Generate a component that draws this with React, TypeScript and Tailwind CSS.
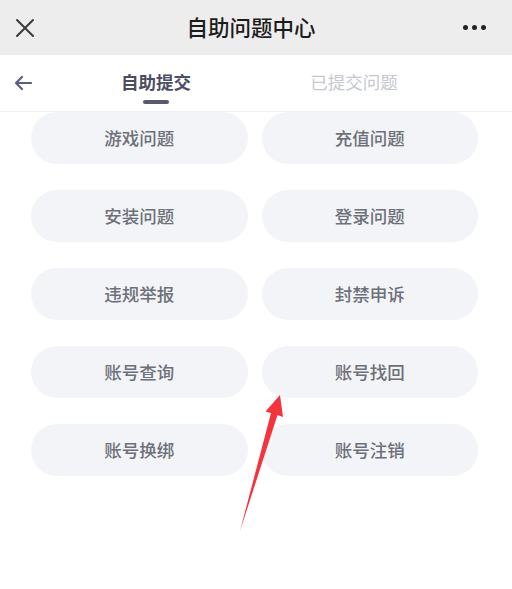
import React from 'react'

const ITEMS = [
  '游戏问题',
  '充值问题',
  '安装问题',
  '登录问题',
  '违规举报',
  '封禁申诉',
  '账号查询',
  '账号找回',
  '账号换绑',
  '账号注销'
]

const FONT = { fontFamily: '"Noto Sans CJK SC", "Noto Sans", sans-serif' }

function TopBar() {
  return (
    <div className="h-[55px] bg-[#ededed] flex items-center justify-between px-[14px]">
      <svg width="20" height="20" viewBox="0 0 20 20" className="ml-[1px]">
        <path d="M2 2 L18 18 M18 2 L2 18" stroke="#3a3a3a" strokeWidth="2" strokeLinecap="round" />
      </svg>
      <div className="text-[21.5px] font-medium text-[#1c1c1c] ml-[4px]">自助问题中心</div>
      <div className="flex gap-[4px] mr-[12px]">
        <span className="w-[5px] h-[5px] rounded-full bg-[#222]" />
        <span className="w-[5px] h-[5px] rounded-full bg-[#222]" />
        <span className="w-[5px] h-[5px] rounded-full bg-[#222]" />
      </div>
    </div>
  )
}

function Tabs() {
  return (
    <div className="h-[57px] bg-white flex items-start border-b border-[#eef0f4]">
      <svg width="20" height="16" viewBox="0 0 20 16" className="ml-[13px] mt-[20px]">
        <path d="M18 8 H3 M9 2 L3 8 L9 14" stroke="#5b5e80" strokeWidth="2.2" fill="none" strokeLinecap="round" strokeLinejoin="round" />
      </svg>
      <div className="w-[198px] ml-[24px] flex flex-col items-center">
        <div className="mt-[15px] text-[17.5px] font-bold text-[#4b4d63] leading-[24px]">自助提交</div>
        <div className="mt-[6px] w-[26px] h-[4px] rounded-full bg-[#575a6c]" />
      </div>
      <div className="w-[198px] flex flex-col items-center">
        <div className="mt-[15px] text-[17.5px] text-[#c5c8cf] leading-[24px]">已提交问题</div>
      </div>
    </div>
  )
}

function RedArrow() {
  return (
    <svg className="absolute left-0 top-0 pointer-events-none" width="512" height="589" viewBox="0 0 512 589">
      <polygon
        points="280,395 283,417 277.5,415 240,531 271,413 265.5,411.5"
        fill="#f5333f"
      />
    </svg>
  )
}

export default function App() {
  return (
    <div className="relative w-[512px] h-[589px] bg-white overflow-hidden" style={FONT}>
      <TopBar />
      <Tabs />
      <div className="grid grid-cols-2 gap-x-[14px] gap-y-[26px] pl-[31px] pr-[34px]">
        {ITEMS.map((label) => (
          <div
            key={label}
            className="h-[52px] rounded-full bg-[#f2f4f7] flex items-center justify-center text-[17.5px] text-[#6d7079] font-medium"
          >
            {label}
          </div>
        ))}
      </div>
      <RedArrow />
    </div>
  )
}
